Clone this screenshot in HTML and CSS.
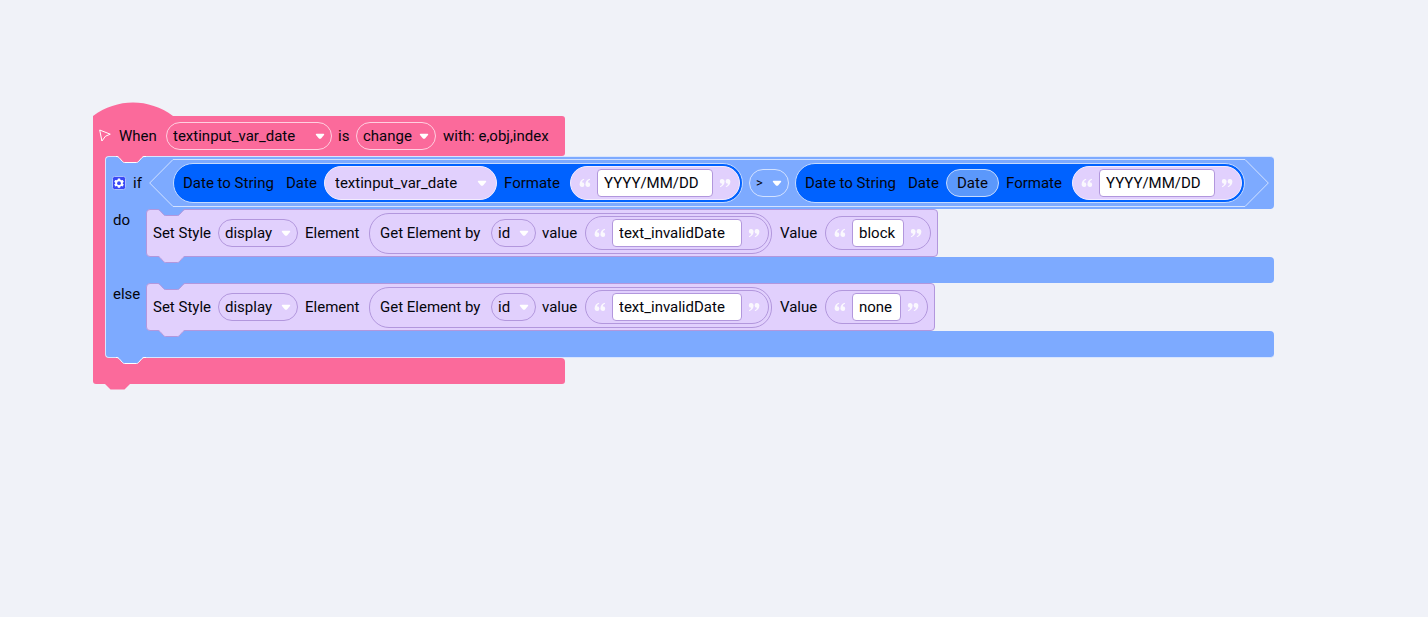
FILE: index.html
```html
<!DOCTYPE html>
<html lang="en">
<head>
<meta charset="utf-8">
<meta name="viewport" content="width=device-width, initial-scale=1">
<title>Block editor</title>
<link rel="stylesheet" href="styles.css">
</head>
<body>
<svg class="defs" aria-hidden="true">
  <symbol id="arrow" viewBox="0 0 10 7"><path d="M1.6 .8h6.800q1.400 0 .6 1.200L6.300 5.200q-1.300 1.300-2.600 0L1 2Q.2.8 1.600.8z"/></symbol>
  <symbol id="quote" viewBox="0 0 12 10"><path d="M5 .7C2.200 1.500.6 3.600.6 6.400A2.400 2.400 0 1 0 3 4.200C3.300 3 4 2.200 5.300 1.700z"/><path d="M10.800 .7C8 1.500 6.400 3.600 6.400 6.400A2.400 2.400 0 1 0 8.800 4.200C9.100 3 9.800 2.200 11.100 1.700z"/></symbol>
  <symbol id="notch" viewBox="0 0 30 8"><path d="M1 0 7.500 6.500H21.500L28 0z"/><path class="line" d="M0 .5H1Q2 .5 3 1.500L6.500 5.500Q7.500 6.500 8.500 6.500H20.500Q21.500 6.500 22.500 5.500L26 1.500Q27 .5 28 .5H30"/></symbol>
</svg>
<main class="workspace">
  <section class="event">
    <svg class="hat" viewBox="0 0 80 14" aria-hidden="true"><path d="M0 14C24-4 56-4 80 14z"/></svg>
    <header class="event-head">
      <svg class="cursor" viewBox="0 0 14 14" aria-hidden="true"><path d="M.7 1 11.300 5.200 6.500 7.200 2.900 12z"/></svg>
      <span>When</span>
      <span class="drop drop-variable"><select aria-label="Component"><option>textinput_var_date</option></select><svg><use href="#arrow"/></svg></span>
      <span>is</span>
      <span class="drop drop-medium"><select aria-label="Event"><option>change</option></select><svg><use href="#arrow"/></svg></span>
      <span>with: e,obj,index</span>
    </header>
    <div class="event-body">
      <section class="branch">
        <svg class="notch notch-top" aria-hidden="true"><use href="#notch"/></svg>
        <div class="branch-head">
          <button class="gear" type="button" aria-label="Configure if block"><svg viewBox="0 0 14 14"><rect x=".5" y=".5" width="13" height="13" rx="2"/><path d="M5.900 2.500h2.200l.3 1.300 1 .5 1.300-.4 1.100 1.900-1 .9v1l1 .9-1.100 1.900-1.300-.4-1 .5-.3 1.200H5.900l-.3-1.200-1-.5-1.300.4-1.100-1.900 1-.9v-1l-1-.9 1.100-1.900 1.300.4 1-.5z"/><circle cx="7" cy="7.200" r="1.900"/></svg></button>
          <span class="if-label">if</span>
          <div class="compare">
            <svg class="cap" viewBox="0 0 24 48" aria-hidden="true"><path d="M24 .5 .7 24 24 47.500"/></svg>
            <div class="compare-body">
              <div class="date-string">
                <span>Date to String</span><span>Date</span>
                <span class="drop drop-filled"><select aria-label="Date variable"><option>textinput_var_date</option></select><svg><use href="#arrow"/></svg></span>
                <span>Formate</span>
                <span class="quoted on-blue"><svg><use href="#quote"/></svg><input class="input-format" aria-label="Date format" value="YYYY/MM/DD"><svg class="close"><use href="#quote"/></svg></span>
              </div>
              <span class="drop drop-operator"><select aria-label="Operator"><option>&gt;</option></select><svg><use href="#arrow"/></svg></span>
              <div class="date-string">
                <span>Date to String</span><span>Date</span>
                <span class="date-value">Date</span>
                <span>Formate</span>
                <span class="quoted on-blue"><svg><use href="#quote"/></svg><input class="input-format" aria-label="Compared date format" value="YYYY/MM/DD"><svg class="close"><use href="#quote"/></svg></span>
              </div>
            </div>
            <svg class="cap flip" viewBox="0 0 24 48" aria-hidden="true"><path d="M24 .5 .7 24 24 47.500"/></svg>
          </div>
        </div>
        <div class="branch-row">
          <span class="arm">do</span>
          <div class="statement">
            <svg class="notch notch-top" aria-hidden="true"><use href="#notch"/></svg>
            <span class="set-label">Set Style</span>
            <span class="drop drop-medium"><select aria-label="Style property"><option>display</option></select><svg><use href="#arrow"/></svg></span>
            <span class="element-label">Element</span>
            <div class="element">
              <span>Get Element by</span>
              <span class="drop drop-small"><select aria-label="Lookup key"><option>id</option></select><svg><use href="#arrow"/></svg></span>
              <span>value</span>
              <span class="quoted"><svg><use href="#quote"/></svg><input class="input-id" aria-label="Element id" value="text_invalidDate"><svg class="close"><use href="#quote"/></svg></span>
            </div>
            <span class="value-label">Value</span>
            <span class="quoted"><svg><use href="#quote"/></svg><input class="input-block" aria-label="Style value" value="block"><svg class="close"><use href="#quote"/></svg></span>
            <svg class="notch notch-bottom" aria-hidden="true"><use href="#notch"/></svg>
          </div>
        </div>
        <div class="branch-bar"></div>
        <div class="branch-row">
          <span class="arm">else</span>
          <div class="statement">
            <svg class="notch notch-top" aria-hidden="true"><use href="#notch"/></svg>
            <span class="set-label">Set Style</span>
            <span class="drop drop-medium"><select aria-label="Style property"><option>display</option></select><svg><use href="#arrow"/></svg></span>
            <span class="element-label">Element</span>
            <div class="element">
              <span>Get Element by</span>
              <span class="drop drop-small"><select aria-label="Lookup key"><option>id</option></select><svg><use href="#arrow"/></svg></span>
              <span>value</span>
              <span class="quoted"><svg><use href="#quote"/></svg><input class="input-id" aria-label="Element id" value="text_invalidDate"><svg class="close"><use href="#quote"/></svg></span>
            </div>
            <span class="value-label">Value</span>
            <span class="quoted"><svg><use href="#quote"/></svg><input class="input-none" aria-label="Style value" value="none"><svg class="close"><use href="#quote"/></svg></span>
            <svg class="notch notch-bottom" aria-hidden="true"><use href="#notch"/></svg>
          </div>
        </div>
        <div class="branch-bar last"></div>
        <svg class="notch notch-bottom" aria-hidden="true"><use href="#notch"/></svg>
      </section>
    </div>
    <footer class="event-foot"></footer>
    <svg class="notch notch-bottom" aria-hidden="true"><use href="#notch"/></svg>
  </section>
</main>
</body>
</html>
```
FILE: styles.css
```css
:root {
  --canvas: #f0f2f8;
  --pink: #fb6a9b;
  --blue: #7daaff;
  --deep: #0062ff;
  --lilac: #e1d0fd;
  --lilac-line: #b297dd;
  --light-line: #d3e2ff;
}

* { box-sizing: border-box; }

body {
  margin: 0;
  background: var(--canvas);
  color: #05050c;
  font: 15px/20px Roboto, "Liberation Sans", sans-serif;
}

.defs { position: absolute; width: 0; height: 0; }
svg { display: block; flex: none; }
span { white-space: nowrap; }

.workspace { min-height: 100vh; padding: 102px 93px; }

.event { position: relative; width: fit-content; }
.hat { width: 80px; height: 14px; fill: var(--pink); }

.event-head,
.event-foot {
  width: 472px;
  background: var(--pink);
}
.event-head {
  display: grid;
  grid-template-columns: 20px 47px 172px 18px 87px auto;
  align-items: center;
  height: 40px;
  padding-left: 6px;
  border-radius: 0 3px 3px 0;
}
.cursor { width: 14px; height: 14px; fill: none; stroke: #fff; stroke-linejoin: round; }
.event-body { padding-left: 12px; background: linear-gradient(90deg, var(--pink) 16px, transparent 16px); }
.event-foot { height: 26px; border-radius: 0 4px 3px 3px; }

.branch { position: relative; }
.branch-head {
  display: flex;
  align-items: center;
  height: 53px;
  padding: 0 5px 0 6px;
  background: var(--blue);
  border-top: 1px solid #d9e6ff;
  border-left: 1px solid #d9e6ff;
  border-radius: 4px 4px 4px 0;
}
.gear { display: block; width: 14px; height: 14px; padding: 0; border: 0; background: none; }
.gear svg { width: 14px; height: 14px; }
.gear rect { fill: #3a48f5; stroke: #a9bfff; }
.gear path { fill: #fff; }
.gear circle { fill: #3a48f5; }
.if-label { width: 23px; padding-left: 7px; }

.compare { display: flex; align-items: center; height: 48px; }
.cap { width: 24px; height: 48px; fill: none; stroke: var(--light-line); }
.flip { transform: scaleX(-1); }
.compare-body {
  display: flex;
  gap: 6px;
  align-items: center;
  height: 48px;
  border-top: 1px solid var(--light-line);
  border-bottom: 1px solid var(--light-line);
}

.date-string {
  display: grid;
  grid-template-columns: 103px 38px auto auto auto;
  align-items: center;
  height: 40px;
  padding: 0 2px 0 9px;
  border: 1px solid #c5daff;
  border-radius: 20px;
  background: var(--deep);
}
.date-string > span:nth-child(4) { width: 73px; padding-left: 7px; }
.date-value {
  width: 53px;
  height: 28px;
  padding: 3px 10px;
  border: 1px solid #c5daff;
  border-radius: 14px;
  background: #5b98fb;
}

.drop { position: relative; }
.drop select {
  display: block;
  width: 100%;
  height: 28px;
  padding: 0 0 0 6px;
  border: 1px solid #ffd0e0;
  border-radius: 14px;
  background: transparent;
  color: inherit;
  font: inherit;
  appearance: none;
}
.drop svg {
  position: absolute;
  top: 50%;
  right: 7px;
  width: 10px;
  height: 7px;
  margin-top: -3px;
  fill: #fff;
  pointer-events: none;
}
.drop-variable { width: 166px; }
.drop-medium { width: 80px; }
.drop-small { width: 45px; }
.drop-operator { width: 40px; }
.drop-operator select { border-color: var(--light-line); font-size: 13px; }
.drop-filled { width: 173px; }
.drop-filled select {
  height: 34px;
  padding-left: 10px;
  border-color: #f3ecff;
  border-radius: 17px;
  background: var(--lilac);
}
.drop-filled svg { right: 10px; }

.quoted {
  display: flex;
  gap: 6px;
  align-items: center;
  width: fit-content;
  height: 34px;
  padding: 0 8px;
  border: 1px solid var(--lilac-line);
  border-radius: 17px;
  background: var(--lilac);
}
.on-blue { border-color: #f3ecff; }
.quoted svg { width: 12px; height: 10px; fill: #fff; opacity: .85; }
.quoted .close { transform: rotate(180deg); }
.quoted input {
  height: 28px;
  padding: 0 6px;
  border: 1px solid var(--lilac-line);
  border-radius: 4px;
  background: #fff;
  color: #05050c;
  font: inherit;
}
.input-format { width: 116px; }
.input-id { width: 130px; }
.input-block { width: 52px; }
.input-none { width: 49px; }

.branch-row { display: flex; height: 48px; }
.arm {
  width: 45px;
  margin-right: -4px;
  padding-top: 1px;
  padding-left: 7px;
  background: var(--blue);
  border-left: 1px solid #d9e6ff;
}
.branch-bar {
  height: 26px;
  background: var(--blue);
  border-left: 1px solid #d9e6ff;
  border-radius: 0 4px 4px 0;
}
.branch-bar.last { height: 27px; border-bottom: 1px solid #d9e6ff; border-bottom-left-radius: 4px; }

.statement {
  position: relative;
  display: flex;
  align-items: center;
  padding: 0 6px;
  border: 1px solid var(--lilac-line);
  border-radius: 4px;
  background: var(--lilac);
}
.statement .drop select { border-color: var(--lilac-line); }
.set-label { width: 65px; }
.element-label { width: 71px; padding-left: 7px; }
.value-label { width: 53px; padding-left: 8px; }
.element {
  display: grid;
  grid-template-columns: 111px 51px 43px auto;
  align-items: center;
  height: 41px;
  padding: 0 2px 0 10px;
  border: 1px solid var(--lilac-line);
  border-radius: 20px;
}

.notch { position: absolute; left: 11px; z-index: 1; width: 30px; height: 8px; }
.notch-top { top: 0; fill: var(--pink); }
.notch-bottom { top: 100%; margin-top: -1px; fill: var(--blue); }
.notch { stroke: #fff; }
.statement .notch { left: 10px; stroke: var(--lilac-line); }
.statement .notch-top { top: -1px; fill: var(--blue); }
.statement .notch-bottom { margin-top: 0; fill: var(--lilac); }
.event > .notch { left: 10px; stroke: none; fill: var(--pink); }
#notch path:first-child { stroke: none; }
#notch .line { fill: none; }
```
